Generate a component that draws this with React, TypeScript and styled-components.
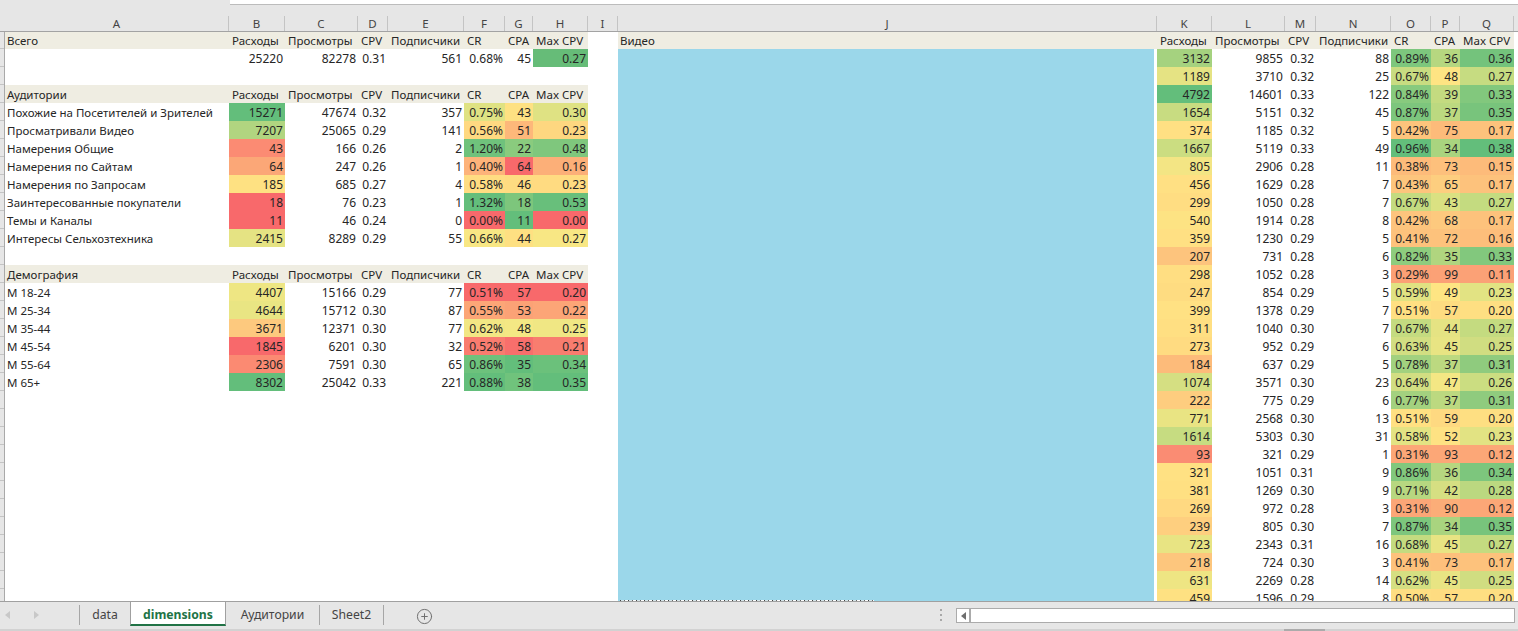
import React from 'react';
import styled, { createGlobalStyle } from 'styled-components';
import { CirclePlus } from 'lucide-react';

const FONT = `"Noto Sans", "Open Sans", sans-serif`;
const COLUMNS = ['A', 'B', 'C', 'D', 'E', 'F', 'G', 'H', 'I', 'J', 'K', 'L', 'M', 'N', 'O', 'P', 'Q', ''];
const TEMPLATE = '224px 56px 73px 30px 76px 41px 28px 55px 30px 539px 55px 73px 31px 75px 40px 29px 54px 1fr';
const METRICS = ['Расходы', 'Просмотры', 'CPV', 'Подписчики', 'CR', 'CPA', 'Max CPV'];

interface LeftRow {
  label: string;
  values: string[];
  fills: string[];
}

const total: LeftRow = {
  label: '',
  values: ['25220', '82278', '0.31', '561', '0.68%', '45', '0.27'],
  fills: ['', '', '#66BC78'],
};

const audiences: LeftRow[] = [
  { label: 'Похожие на Посетителей и Зрителей', values: ['15271', '47674', '0.32', '357', '0.75%', '43', '0.30'], fills: ['#63BE7B', '#DFE283', '#FEE182', '#DFE283'] },
  { label: 'Просматривали Видео', values: ['7207', '25065', '0.29', '141', '0.56%', '51', '0.23'], fills: ['#B1D580', '#FFD981', '#FDB87A', '#FED780'] },
  { label: 'Намерения Общие', values: ['43', '166', '0.26', '2', '1.20%', '22', '0.48'], fills: ['#FB8B73', '#6FC27C', '#8ACB7E', '#7FC77D'] },
  { label: 'Намерения по Сайтам', values: ['64', '247', '0.26', '1', '0.40%', '64', '0.16'], fills: ['#FBA777', '#FDB37A', '#F8696B', '#FCAF78'] },
  { label: 'Намерения по Запросам', values: ['185', '685', '0.27', '4', '0.58%', '46', '0.23'], fills: ['#FEE182', '#FFDD82', '#FEDC81', '#FFDB81'] },
  { label: 'Заинтересованные покупатели', values: ['18', '76', '0.23', '1', '1.32%', '18', '0.53'], fills: ['#F8696B', '#63BE7B', '#7DC67C', '#68BF7B'] },
  { label: 'Темы и Каналы', values: ['11', '46', '0.24', '0', '0.00%', '11', '0.00'], fills: ['#F8696B', '#F8696B', '#63BE7B', '#F8696B'] },
  { label: 'Интересы Сельхозтехника', values: ['2415', '8289', '0.29', '55', '0.66%', '44', '0.27'], fills: ['#E5E383', '#F8E784', '#FEE082', '#F8E784'] },
];

const demographics: LeftRow[] = [
  { label: 'М 18-24', values: ['4407', '15166', '0.29', '77', '0.51%', '57', '0.20'], fills: ['#EEE683', '#F8696B', '#F8696B', '#F8696B'] },
  { label: 'М 25-34', values: ['4644', '15712', '0.30', '87', '0.55%', '53', '0.22'], fills: ['#E9E583', '#FCA677', '#FBA276', '#FCA577'] },
  { label: 'М 35-44', values: ['3671', '12371', '0.30', '77', '0.62%', '48', '0.25'], fills: ['#FDC97E', '#F2E784', '#F4E884', '#F0E784'] },
  { label: 'М 45-54', values: ['1845', '6201', '0.30', '32', '0.52%', '58', '0.21'], fills: ['#F8696B', '#F97C6F', '#F86F6C', '#F87D6F'] },
  { label: 'М 55-64', values: ['2306', '7591', '0.30', '65', '0.86%', '35', '0.34'], fills: ['#FB8A72', '#6DC27C', '#63BE7B', '#6BC17B'] },
  { label: 'М 65+', values: ['8302', '25042', '0.33', '221', '0.88%', '38', '0.35'], fills: ['#63BE7B', '#63BE7B', '#70C37C', '#63BE7B'] },
];

// K..Q: spend, views, cpv, subs, cr, cpa, max cpv + fills for K, O, P, Q
const videos: [string, string, string, string, string, string, string, string, string, string, string][] = [
  ['3132', '9855', '0.32', '88', '0.89%', '36', '0.36', '#A5D27F', '#7DC77D', '#B6D780', '#74C37C'],
  ['1189', '3710', '0.32', '25', '0.67%', '48', '0.27', '#E5E383', '#C8DC81', '#FEE483', '#C6DC81'],
  ['4792', '14601', '0.33', '122', '0.84%', '39', '0.33', '#63BE7B', '#88CA7E', '#C4DB80', '#82C87D'],
  ['1654', '5151', '0.32', '45', '0.87%', '37', '0.35', '#C8DC81', '#7DC67D', '#BCD980', '#78C47C'],
  ['374', '1185', '0.32', '5', '0.42%', '75', '0.17', '#FFE083', '#FDC47C', '#FDBB7A', '#FDC27C'],
  ['1667', '5119', '0.33', '49', '0.96%', '34', '0.38', '#CBDD81', '#63BE7B', '#A9D47F', '#63BE7B'],
  ['805', '2906', '0.28', '11', '0.38%', '73', '0.15', '#F3E584', '#FDBB7A', '#FDC07C', '#FDBB7A'],
  ['456', '1629', '0.28', '7', '0.43%', '65', '0.17', '#FFE083', '#FDC57D', '#FDCE7F', '#FDC27C'],
  ['299', '1050', '0.28', '7', '0.67%', '43', '0.27', '#FFDD82', '#C4DB80', '#DAE182', '#C4DB80'],
  ['540', '1914', '0.28', '8', '0.42%', '68', '0.17', '#FDE383', '#FDC47D', '#FDC97E', '#FDC27C'],
  ['359', '1230', '0.29', '5', '0.41%', '72', '0.16', '#FFE083', '#FDC27C', '#FDC27C', '#FDBE7B'],
  ['207', '731', '0.28', '6', '0.82%', '35', '0.33', '#FDC47D', '#8ECC7E', '#B0D57F', '#82C87D'],
  ['298', '1052', '0.28', '3', '0.29%', '99', '0.11', '#FFDE82', '#FBA075', '#FBA176', '#FBA176'],
  ['247', '854', '0.29', '5', '0.59%', '49', '0.23', '#FEDC81', '#E0E282', '#FEE583', '#E2E383'],
  ['399', '1378', '0.29', '7', '0.51%', '57', '0.20', '#FFE183', '#FFE082', '#FEDC81', '#FEDF82'],
  ['311', '1040', '0.30', '7', '0.67%', '44', '0.27', '#FFDF82', '#C4DB80', '#E5E383', '#C4DB80'],
  ['273', '952', '0.29', '6', '0.63%', '45', '0.25', '#FFDB81', '#D2DE82', '#E8E483', '#D0DD81'],
  ['184', '637', '0.29', '5', '0.78%', '37', '0.31', '#FDBB7A', '#A2D17F', '#BCD980', '#8FCB7E'],
  ['1074', '3571', '0.30', '23', '0.64%', '47', '0.26', '#D5DF82', '#D2DE82', '#F4E784', '#CBDD81'],
  ['222', '775', '0.29', '6', '0.77%', '37', '0.31', '#FECD7F', '#A3D17F', '#BCD980', '#8FCB7E'],
  ['771', '2568', '0.30', '13', '0.51%', '59', '0.20', '#E9E483', '#FFE082', '#FED981', '#FEDF82'],
  ['1614', '5303', '0.30', '31', '0.58%', '52', '0.23', '#C6DC81', '#E3E383', '#FEE283', '#E2E383'],
  ['93', '321', '0.29', '1', '0.31%', '93', '0.12', '#FA8C73', '#FCA777', '#FCA777', '#FCA777'],
  ['321', '1051', '0.31', '9', '0.86%', '36', '0.34', '#FFE183', '#82C87D', '#B6D780', '#7DC67D'],
  ['381', '1269', '0.30', '9', '0.71%', '42', '0.28', '#FFE082', '#B7D780', '#D6DF82', '#BBD880'],
  ['269', '972', '0.28', '3', '0.31%', '90', '0.12', '#FFD981', '#FBA677', '#FBAD78', '#FCA777'],
  ['239', '805', '0.30', '7', '0.87%', '34', '0.35', '#FECF7F', '#7DC67D', '#A9D47F', '#78C47C'],
  ['723', '2343', '0.31', '16', '0.68%', '45', '0.27', '#E8E483', '#C4DB80', '#E8E483', '#C4DB80'],
  ['218', '724', '0.30', '3', '0.41%', '73', '0.17', '#FDC67D', '#FDC27C', '#FDC07C', '#FDC27C'],
  ['631', '2269', '0.28', '14', '0.62%', '45', '0.25', '#EEE583', '#D5DF82', '#E8E483', '#D0DD81'],
  ['459', '1596', '0.29', '8', '0.50%', '57', '0.20', '#FEE182', '#FEDE82', '#FEDC81', '#FEDF82'],
];

const GlobalStyle = createGlobalStyle`
  html, body {
    margin: 0;
    padding: 0;
    background: #fff;
  }
`;

const Window = styled.div`
  display: flex;
  flex-direction: column;
  width: 1518px;
  height: 631px;
  overflow: hidden;
  background: #e6e6e6;
  font-family: ${FONT};
  color: #262626;
`;

const FormulaStrip = styled.div`
  height: 16px;
  padding-left: 230px;
  box-sizing: border-box;
`;

const FormulaInput = styled.div`
  height: 5px;
  background: #fff;
  border-bottom: 1px solid #bcbcbc;
  box-sizing: border-box;
`;

const ColumnHeaders = styled.div`
  display: grid;
  grid-template-columns: 5px ${TEMPLATE};
  height: 16px;
  margin-bottom: -1px;
  box-sizing: border-box;
  border-bottom: 1px solid #a3a3a3;
  position: relative;
`;

const ColumnLetter = styled.div`
  font-size: 11.5px;
  line-height: 15px;
  text-align: center;
  color: #444;
  border-right: 1px solid #c4c4c4;
  &:last-child {
    border-right: 0;
  }
`;

const SheetArea = styled.div`
  display: flex;
  height: 570px;
`;

const RowGutter = styled.div`
  width: 5px;
  flex: none;
  box-sizing: border-box;
  border-right: 1px solid #a9a9a9;
  background: repeating-linear-gradient(to bottom, #e6e6e6 0 17px, #c4c4c4 17px 18px);
`;

const SheetGrid = styled.div`
  flex: 1;
  display: grid;
  grid-template-columns: ${TEMPLATE};
  grid-auto-rows: 18px;
  overflow: hidden;
  background: #fff;
  line-height: 20px;
`;

const HeadCell = styled.div`
  background: #efede2;
  padding-left: 3px;
  font-size: 11.5px;
  white-space: nowrap;
  overflow: hidden;
`;

const TitleCell = styled(HeadCell)`
  padding-left: 2px;
`;

const LabelCell = styled.div`
  padding-left: 2px;
  font-size: 11.5px;
  white-space: nowrap;
`;

const NumCell = styled.div<{ $fill?: string }>`
  background: ${p => p.$fill || 'transparent'};
  font-size: 12px;
  text-align: right;
  padding-right: 2px;
  white-space: nowrap;
`;

const BlankCell = styled.div``;

const VideoBlock = styled.div`
  grid-column: 10;
  grid-row: 2 / span 31;
  height: 552px;
  margin-right: 3px;
  display: flex;
  flex-direction: column;
  justify-content: flex-end;
  background: #9bd7ea;
`;

const ClippedTitle = styled.div`
  height: 1px;
  width: 254px;
  margin-left: 2px;
  background: repeating-linear-gradient(to right, #444 0 1px, #d8e8ec 1px 4px, #666 4px 5px, #fff 5px 8px);
`;

const TabBar = styled.div`
  display: flex;
  align-items: flex-start;
  height: 28px;
  box-sizing: border-box;
  border-top: 1px solid #a0a0a0;
`;

const TabNav = styled.div`
  width: 80px;
  height: 20px;
  margin-top: 3px;
  flex: none;
  display: flex;
  align-items: center;
  gap: 24px;
  padding-left: 5px;
  box-sizing: border-box;
  border-right: 1px solid #a6a6a6;
`;

const Tab = styled.div<{ $width: number }>`
  width: ${p => p.$width}px;
  height: 20px;
  margin-top: 3px;
  flex: none;
  box-sizing: border-box;
  text-align: center;
  font-size: 12.2px;
  line-height: 19px;
  color: #444;
  border-right: 1px solid #a6a6a6;
`;

const ActiveTab = styled.div`
  width: 96px;
  height: 24px;
  flex: none;
  box-sizing: border-box;
  text-align: center;
  font-size: 12.2px;
  font-weight: 700;
  line-height: 25px;
  color: #217346;
  background: #fff;
  border-left: 1px solid #a0a0a0;
  border-right: 1px solid #a0a0a0;
  border-bottom: 2px solid #217346;
  margin-left: -1px;
`;

const AddSheet = styled.div`
  margin: 6px 0 0 32px;
  color: #6e6e6e;
  display: flex;
`;

const Splitter = styled.div`
  width: 2px;
  height: 12px;
  margin: 7px 0 0 507px;
  flex: none;
  background: repeating-linear-gradient(to bottom, #a8a8a8 0 2px, transparent 2px 5px);
`;

const ScrollTrack = styled.div`
  width: 559px;
  height: 15px;
  margin: 6px 0 0 14px;
  flex: none;
  display: flex;
  box-sizing: border-box;
  background: #fff;
  border: 1px solid #ababab;
`;

const ScrollButton = styled.div`
  width: 14px;
  flex: none;
  display: flex;
  align-items: center;
  justify-content: center;
  box-sizing: border-box;
  border-right: 2px solid #ababab;
`;

const BottomStrip = styled.div`
  height: 2px;
  box-sizing: border-box;
  padding-left: 1284px;
  background: #d2d2d2;
`;

const StripNotch = styled.div`
  width: 41px;
  height: 2px;
  background: #ababab;
`;

const Triangle: React.FC<{ dir: 'left' | 'right'; color: string }> = ({ dir, color }) => (
  <svg width="5" height="8" viewBox="0 0 5 8">
    <path d={dir === 'left' ? 'M5 0 L0 4 L5 8 Z' : 'M0 0 L5 4 L0 8 Z'} fill={color} />
  </svg>
);

const renderLeft = (row: LeftRow, key: number) => {
  const hasFourFills = row.fills.length === 4;
  const fillFor = (i: number) => {
    if (hasFourFills) return [row.fills[0], '', '', '', row.fills[1], row.fills[2], row.fills[3]][i];
    return i === 6 ? row.fills[2] : '';
  };
  return [
    <LabelCell key={`${key}-label`}>{row.label}</LabelCell>,
    ...row.values.map((v, i) => (
      <NumCell key={`${key}-${i}`} $fill={fillFor(i)}>{v}</NumCell>
    )),
  ];
};

const renderHead = (title: string, key: number) => [
  <TitleCell key={`${key}-title`}>{title}</TitleCell>,
  ...METRICS.map(m => <HeadCell key={`${key}-${m}`}>{m}</HeadCell>),
];

const blankLeft = (key: number) =>
  Array.from({ length: 8 }, (_, i) => <BlankCell key={`${key}-blank-${i}`} />);

const leftPart = (index: number) => {
  if (index === 1) return renderLeft(total, index);
  if (index === 3) return renderHead('Аудитории', index);
  if (index >= 4 && index <= 11) return renderLeft(audiences[index - 4], index);
  if (index === 13) return renderHead('Демография', index);
  if (index >= 14 && index <= 19) return renderLeft(demographics[index - 14], index);
  return blankLeft(index);
};

const App: React.FC = () => {
  return (
    <Window>
      <GlobalStyle />
      <FormulaStrip>
        <FormulaInput />
      </FormulaStrip>
      <ColumnHeaders>
        <BlankCell />
        {COLUMNS.map((c, i) => <ColumnLetter key={i}>{c}</ColumnLetter>)}
      </ColumnHeaders>
      <SheetArea>
        <RowGutter />
        <SheetGrid>
          {renderHead('Всего', 0)}
          <BlankCell />
          <TitleCell>Видео</TitleCell>
          {METRICS.map(m => <HeadCell key={`r-${m}`}>{m}</HeadCell>)}
          <BlankCell />
          <VideoBlock>
            <ClippedTitle />
          </VideoBlock>
          {videos.map((v, i) => (
            <React.Fragment key={i}>
              {leftPart(i + 1)}
              <BlankCell />
              <NumCell $fill={v[7]}>{v[0]}</NumCell>
              <NumCell>{v[1]}</NumCell>
              <NumCell>{v[2]}</NumCell>
              <NumCell>{v[3]}</NumCell>
              <NumCell $fill={v[8]}>{v[4]}</NumCell>
              <NumCell $fill={v[9]}>{v[5]}</NumCell>
              <NumCell $fill={v[10]}>{v[6]}</NumCell>
              <BlankCell />
            </React.Fragment>
          ))}
        </SheetGrid>
      </SheetArea>
      <TabBar>
        <TabNav>
          <Triangle dir="left" color="#c8c8c8" />
          <Triangle dir="right" color="#c8c8c8" />
        </TabNav>
        <Tab $width={51}>data</Tab>
        <ActiveTab>dimensions</ActiveTab>
        <Tab $width={94}>Аудитории</Tab>
        <Tab $width={64}>Sheet2</Tab>
        <AddSheet>
          <CirclePlus size={17} strokeWidth={1.4} />
        </AddSheet>
        <Splitter />
        <ScrollTrack>
          <ScrollButton>
            <Triangle dir="left" color="#6e6e6e" />
          </ScrollButton>
        </ScrollTrack>
      </TabBar>
      <BottomStrip>
        <StripNotch />
      </BottomStrip>
    </Window>
  );
};

export default App;
